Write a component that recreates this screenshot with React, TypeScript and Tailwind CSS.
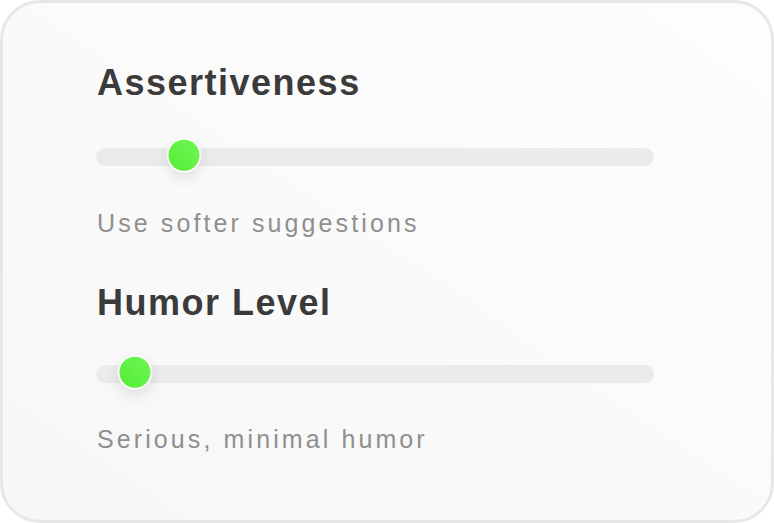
import { useState } from 'react';

interface Setting {
  title: string;
  value: number;
  hint: string;
}

const settings: Setting[] = [
  { title: 'Assertiveness', value: 15.8, hint: 'Use softer suggestions' },
  { title: 'Humor Level', value: 7, hint: 'Serious, minimal humor' },
];

function Slider({ value }: { value: number }) {
  return (
    <div className="relative h-[18px] w-[558px] rounded-full bg-[#ebebeb]">
      {/* thumb */}
      <div
        className="absolute top-1/2 h-[35px] w-[35px] -translate-x-1/2 -translate-y-[55%] rounded-full bg-[#fafafa] p-[2px] shadow-[0_6px_14px_rgba(0,0,0,0.10)]"
        style={{ left: `${value}%` }}
      >
        <div className="h-full w-full rounded-full bg-gradient-to-tr from-[#52ec31] to-[#70f755]" />
      </div>
    </div>
  );
}

export default function App() {
  const [items] = useState(settings);

  return (
    <div className="h-[523px] w-[774px] bg-white" style={{ fontFamily: '"Liberation Sans", Arial, sans-serif' }}>
      <div className="h-full w-full rounded-[40px] border-[3px] border-[#e7e7e7] bg-gradient-to-tr from-[#f7f7f7] to-[#fdfdfd] pl-[93px] pt-[62px]">
        {items.map((item, i) => (
          <div key={item.title} className={i > 0 ? 'mt-[49px]' : ''}>
            <h2 className="pl-px text-[36px] font-bold leading-none tracking-[1.5px] text-[#3b3b3b]">
              {item.title}
            </h2>
            <div className={i > 0 ? 'mt-[44px]' : 'mt-[47px]'}>
              <Slider value={item.value} />
            </div>
            <p className={`${i > 0 ? 'mt-[44px]' : 'mt-[45px]'} pl-px text-[25px] leading-none tracking-[3.1px] text-[#8f8f8f]`}>
              {item.hint}
            </p>
          </div>
        ))}
      </div>
    </div>
  );
}
